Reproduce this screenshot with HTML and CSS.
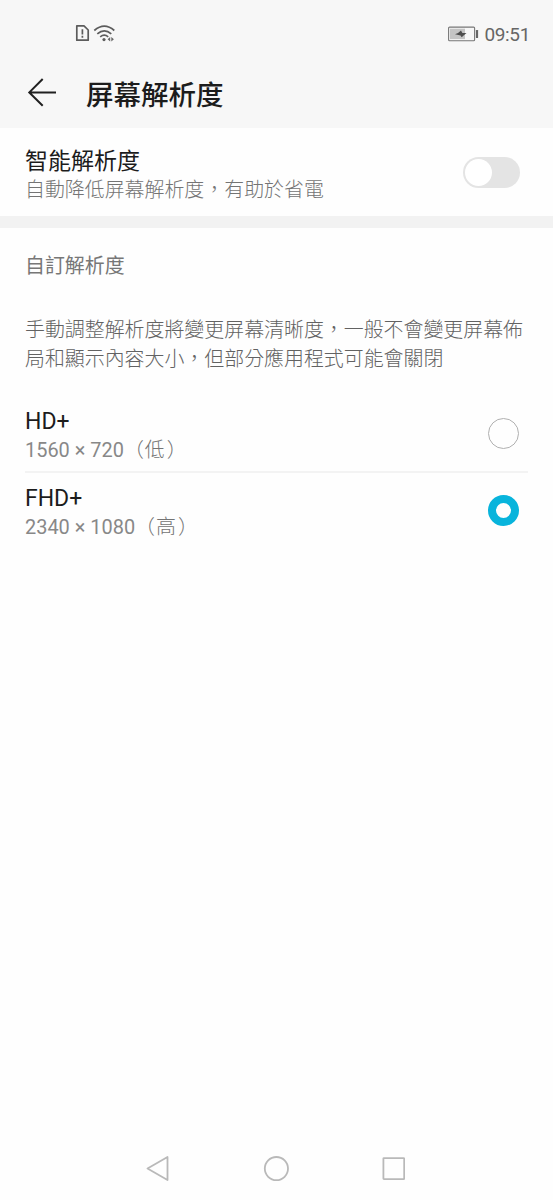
FILE: index.html
```html
<!DOCTYPE html>
<html lang="zh-Hant">
<head>
<meta charset="utf-8">
<title>屏幕解析度</title>
<link rel="stylesheet" href="styles.css">
</head>
<body>
<div class="screen">
  <header class="header">
    <div class="status">
      <div class="status-left">
        <svg width="42" height="22" viewBox="0 0 42 22" fill="none" stroke="#5c5c5c" stroke-width="1.7">
          <path d="M1.8 2.9H9L13.2 7V17.2H1.8Z" stroke-linejoin="round"/>
          <path d="M7.4 6.2V11.4M7.4 12.8V14.8"/>
          <path d="M19.3 7.5Q29.3-1.2 39.3 7.5M22.3 10.9Q29.3 4.8 36.3 10.9M25.2 13.8Q29.3 10.5 33.2 13.8"/>
          <circle cx="29" cy="16.6" r="1.6" fill="#5c5c5c" stroke="none"/>
          <path d="M35.2 14.1L32.6 16.3L35.2 18.5ZM36.3 14.1L38.9 16.3L36.3 18.5Z" fill="#666" stroke="none"/>
        </svg>
      </div>
      <div class="status-right">
        <svg width="32" height="16" viewBox="0 0 32 16">
          <rect x="1.6" y="1.1" width="26" height="13.6" rx="1" fill="#f7f7f7" stroke="#777" stroke-width="1.1"/>
          <rect x="3" y="2.7" width="15" height="10.4" fill="#c4c4c4"/>
          <path d="M8 8.2L11 7L14 4.5L15.4 7H19.5L16.6 9.4L14.7 11.3L13.5 9.5Z" fill="#4d4d4d"/>
          <rect x="28.9" y="4" width="2.2" height="8" rx=".5" fill="#666"/>
        </svg>
        <span class="time">09:51</span>
      </div>
    </div>
    <div class="titlebar">
      <svg class="back" width="30" height="30" viewBox="0 0 30 30" fill="none" stroke="#202020" stroke-width="2">
        <path d="M15.7 1L2.3 14.4L15.7 27.8M2.6 14.4H29"/>
      </svg>
      <h1 class="title">屏幕解析度</h1>
    </div>
  </header>
  <section class="smart">
    <div>
      <div class="name">智能解析度</div>
      <div class="detail">自動降低屏幕解析度，有助於省電</div>
    </div>
    <div class="switch"><div class="knob"></div></div>
  </section>
  <div class="band"></div>
  <section class="custom">
    <h2 class="subhead">自訂解析度</h2>
    <p class="desc">手動調整解析度將變更屏幕清晰度，一般不會變更屏幕佈<br>局和顯示內容大小，但部分應用程式可能會關閉</p>
    <div class="option">
      <div>
        <div class="name">HD+</div>
        <div class="detail">1560 × 720<span class="level"><span class="open">（</span>低<span class="close">）</span></span></div>
      </div>
      <div class="radio"></div>
    </div>
    <div class="option last">
      <div>
        <div class="name">FHD+</div>
        <div class="detail">2340 × 1080<span class="level"><span class="open">（</span>高<span class="close">）</span></span></div>
      </div>
      <div class="radio checked"></div>
    </div>
  </section>
  <nav class="nav">
    <svg width="260" height="30" viewBox="0 0 260 30" fill="none" stroke="#b9b9b9" stroke-width="1.8">
      <path d="M2.5 14.5L22.5 3V26Z" stroke-linejoin="round"/>
      <circle cx="131.4" cy="14.6" r="11.6"/>
      <rect x="238.4" y="4.1" width="20.8" height="21" rx=".5"/>
    </svg>
  </nav>
</div>
</body>
</html>
```
FILE: styles.css
```css
* { box-sizing: border-box; }
body {
  margin: 0;
  background: #fefefe;
  font-family: Roboto, "Noto Sans CJK TC", sans-serif;
  color: #1c1c1c;
}
svg { display: block; }
.screen { height: 1200px; display: flex; flex-direction: column; }
.header { height: 128px; background: #f7f7f7; }
.status {
  height: 68px;
  padding: 0 23px 0 75px;
  display: flex;
  justify-content: space-between;
  align-items: center;
}
.status-right { display: flex; align-items: center; gap: 5px; }
.time { font-size: 19px; line-height: 24px; color: #666; letter-spacing: -.35px; padding-top: 2px; }
.titlebar { display: flex; align-items: center; height: 50px; padding-left: 27px; gap: 29px; }
.title { margin: 0; padding-top: 6px; font-size: 27.5px; line-height: 40px; font-weight: 500; }
.smart {
  height: 88px;
  padding: 20px 33px 0 25px;
  display: flex;
  justify-content: space-between;
}
.name { font-size: 23px; line-height: 28px; height: 28px; }
.detail { font-size: 19.93px; line-height: 30px; height: 30px; color: #747474; font-weight: 300; white-space: nowrap; }
.switch { width: 57px; height: 31px; margin-top: 9px; border-radius: 16px; background: #e4e4e4; padding: 2px; }
.knob { width: 27px; height: 27px; border-radius: 50%; background: #fff; }
.band { height: 12px; background: #f2f2f2; }
.custom { padding: 0 25px; }
.subhead { margin: 24px 0 0; font-size: 19.93px; line-height: 30px; font-weight: 400; color: #777; }
.desc { margin: 34px 0 0; font-size: 19.93px; line-height: 29px; font-weight: 300; color: #626262; white-space: nowrap; }
.option {
  height: 77px;
  display: flex;
  justify-content: space-between;
  padding-right: 9px;
  border-bottom: 2px solid #f3f3f3;
}
.desc + .option { margin-top: 22px; }
.option .name { margin-top: 12px; }
.option .detail { font-weight: 400; color: #888; }
.option .level { font-weight: 300; color: #747474; }
.option .open { margin-right: 1px; }
.option .close { margin-left: 2px; }
.option.last { border-bottom: 0; }
.radio { width: 31px; height: 31px; margin-top: 22px; border: 1.5px solid #b0b0b0; border-radius: 50%; }
.radio.checked { border: 8px solid #08b4dc; }
.nav { margin-top: auto; height: 46px; padding-left: 145px; }
```
